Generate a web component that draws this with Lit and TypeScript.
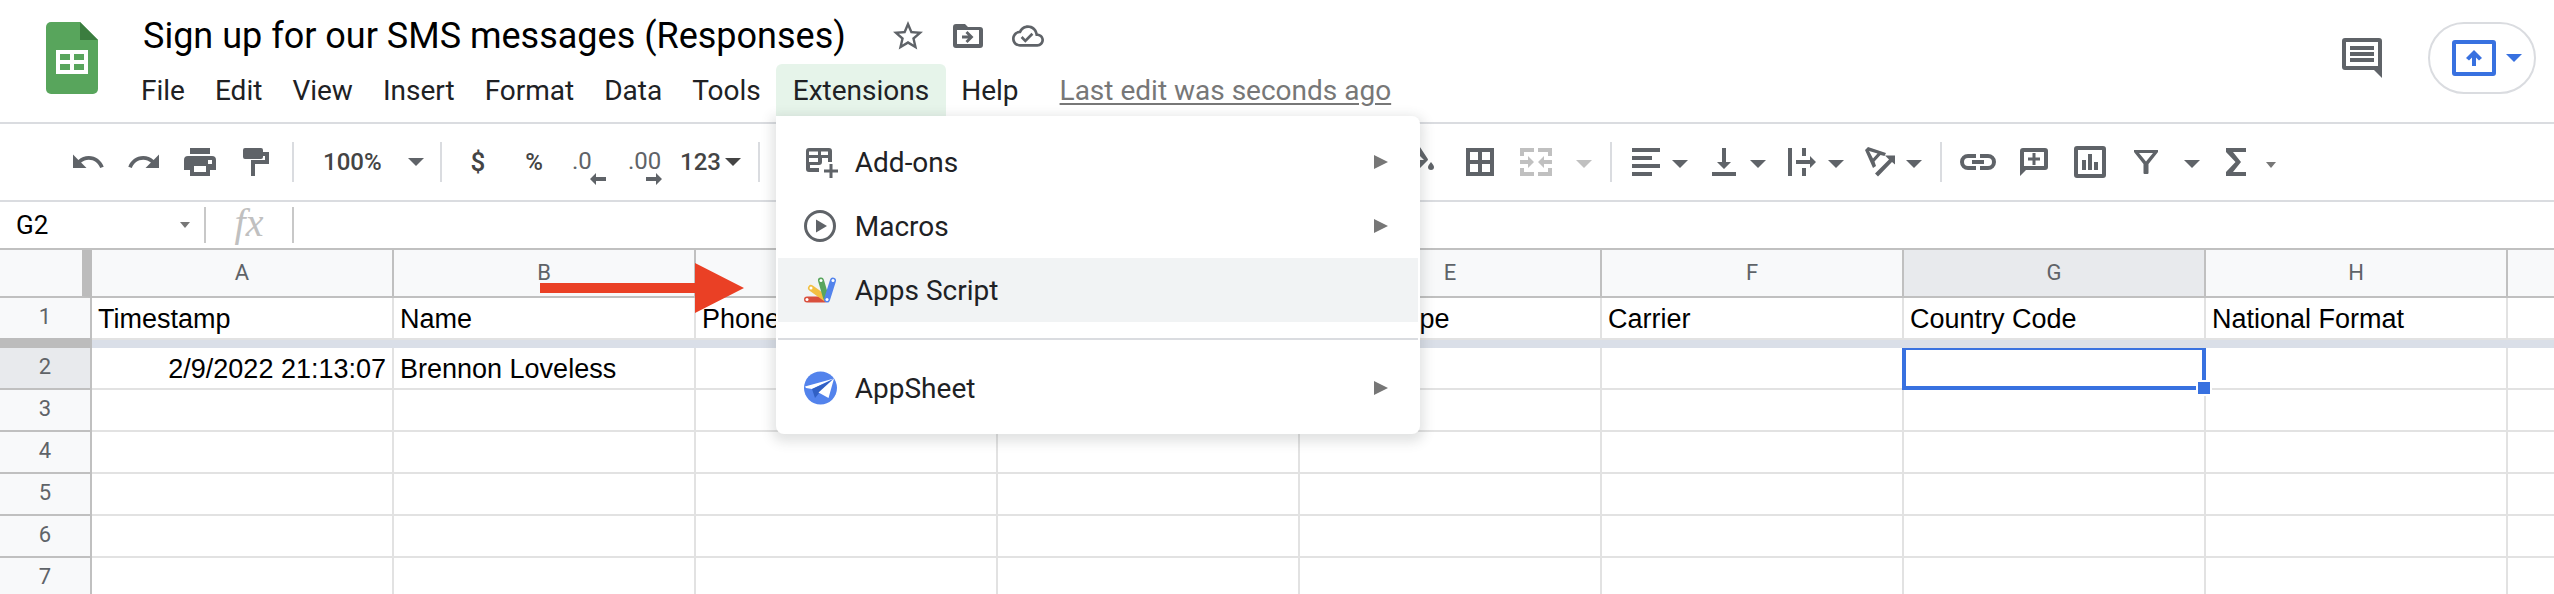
import { LitElement, html, css, svg, nothing, TemplateResult } from "lit";
import { customElement, property, state } from "lit/decorators.js";
import { classMap } from "lit/directives/class-map.js";

// Every icon is drawn on a 36 x 36 grid unless it names its own box.
const icons: Record<string, TemplateResult> = {
  undo: svg`<path transform="scale(1.5)" d="M12.5 8c-2.65 0-5.05.99-6.9 2.6L2 7v9h9l-3.62-3.62c1.39-1.16 3.16-1.88 5.12-1.88 3.54 0 6.55 2.31 7.6 5.5l2.37-.78C21.08 11.03 17.15 8 12.5 8z"/>`,
  redo: svg`<path transform="scale(1.5)" d="M18.4 10.6C16.55 8.99 14.15 8 11.5 8c-4.65 0-8.58 3.03-9.96 7.22L3.9 16c1.05-3.19 4.05-5.5 7.6-5.5 1.95 0 3.73.72 5.12 1.88L13 16h9V7l-3.6 3.6z"/>`,
  print: svg`<path d="M8 4h20v6H8z"/><path fill-rule="evenodd" d="M6 12h24a4 4 0 0 1 4 4v10h-6v6H8v-6H2V16a4 4 0 0 1 4-4zm6 10v6h12v-6zm14-6v4h4v-4z"/>`,
  paint: svg`<path d="M7 4h16a2 2 0 0 1 2 2v2h6v12H17v12h-4V16h14v-4h-2v1a2 2 0 0 1-2 2H7a2 2 0 0 1-2-2V6a2 2 0 0 1 2-2z"/>`,
  fill: svg`<path fill-rule="evenodd" d="M9 2l3-2 9.500 14.500a1.500 1.500 0 0 1 0 2L12 26a2 2 0 0 1-3 0L1 18a2 2 0 0 1 0-3L10 6zm2 7l-7 7h14z"/><path d="M25 18c2 2.500 3 4 3 5a3 3 0 0 1-6 0c0-1 1-2.500 3-5z"/>`,
  borders: svg`<path fill-rule="evenodd" d="M4 4h28v28H4zm4 4v8h8V8zm12 0v8h8V8zM8 20v8h8v-8zm12 0v8h8v-8z"/>`,
  merge: svg`<path d="M2 4h14v4H6v4H2zM20 4h14v8h-4V8H20zM2 24h4v4h10v4H2zM30 24h4v8H20v-4h10zM2 16h8v-4l6 6-6 6v-4H2zM34 16h-8v-4l-6 6 6 6v-4h8z"/>`,
  align: svg`<path d="M4 4h28v4H4zM4 12h20v4H4zM4 20h28v4H4zM4 28h20v4H4z"/>`,
  valign: svg`<path d="M16 4h4v14h5l-7 7-7-7h5zM6 28h24v4H6z"/>`,
  wrap: svg`<path d="M4 4h4v28H4zM18 4h4v8h-4zM18 24h4v8h-4zM12 16h14v-4l6 6-6 6v-4H12z"/>`,
  rotate: svg`<path fill-rule="evenodd" d="M3 6L6 3l18 6-1.500 3-4-1-6 6.500 1.500 4.500-3 2zM7 7l4 7.500 4.500-5z"/><path d="M13 29.500L27 15.500l-4-4h10v9l-3-2.500-14 14.500z"/>`,
  link: svg`<path d="M16 10H8a8 8 0 0 0 0 16h8v-4H8a4 4 0 0 1 0-8h8zM20 10h8a8 8 0 0 1 0 16h-8v-4h8a4 4 0 0 0 0-8h-8zM12 16h12v4H12z"/>`,
  comment: svg`<path fill-rule="evenodd" d="M7 4h22a3 3 0 0 1 3 3v16a3 3 0 0 1-3 3H10l-6 6V7a3 3 0 0 1 3-3zm1 4v14h20V8z"/><path d="M16.500 9h3v4.500H24v3h-4.500V21h-3v-4.500H12v-3h4.500z"/>`,
  chart: svg`<path fill-rule="evenodd" d="M5 2h26a3 3 0 0 1 3 3v26a3 3 0 0 1-3 3H5a3 3 0 0 1-3-3V5a3 3 0 0 1 3-3zm1 4v24h24V6z"/><path d="M10 16h4v10h-4zM16 10h4v16h-4zM22 18h4v8h-4z"/>`,
  filter: svg`<path fill-rule="evenodd" d="M6 6h24v2l-9.500 12v9a1 1 0 0 1-1 1h-3a1 1 0 0 1-1-1v-9L6 8zm5 3l7 8.500L25 9z"/>`,
  sigma: svg`<path d="M6 4h20v4H13l8 10-8 10h13v4H6v-4l9.500-10L6 8z"/>`,
  star: svg`<path transform="scale(1.5)" d="M22 9.240l-7.190-.620L12 2 9.190 8.630 2 9.240l5.460 4.730L5.820 21 12 17.270 18.180 21l-1.630-7.030L22 9.240zM12 15.400l-3.760 2.270 1-4.280-3.320-2.880 4.380-.380L12 6.100l1.710 4.040 4.380.380-3.320 2.880 1 4.280L12 15.400z"/>`,
  move: svg`<path fill-rule="evenodd" d="M6 6h9l3 3h12a3 3 0 0 1 3 3v15a3 3 0 0 1-3 3H6a3 3 0 0 1-3-3V9a3 3 0 0 1 3-3zm1 6v14h22V12z"/><path d="M12 17.500h6l-2.500-2.500 2-2 6 6-6 6-2-2 2.500-2.500h-6z"/>`,
  cloud: svg`<path transform="translate(2 2) scale(1.333)" d="M19.350 10.040C18.670 6.590 15.640 4 12 4 9.110 4 6.600 5.640 5.350 8.040 2.340 8.360 0 10.910 0 14c0 3.310 2.690 6 6 6h13c2.760 0 5-2.240 5-5 0-2.640-2.050-4.780-4.650-4.960zM19 18H6c-2.210 0-4-1.790-4-4 0-2.050 1.530-3.760 3.560-3.970l1.070-.110.500-.950C8.080 7.140 9.940 6 12 6c2.620 0 4.880 1.860 5.390 4.430l.300 1.500 1.530.110c1.560.100 2.780 1.410 2.780 2.960 0 1.650-1.350 3-3 3zm-9-3.820l-2.090-2.090L6.500 13.500 10 17l6.010-6.010-1.410-1.410z"/>`,
  addons: svg`<path fill-rule="evenodd" d="M7 4h20a3 3 0 0 1 3 3v11h-4v-4h-6v4a3 3 0 0 1-3 3H8v3h9v4H7a3 3 0 0 1-3-3V7a3 3 0 0 1 3-3zm0 3.500V11h9V7.500zm12 0V11h7V7.500zM7 14v4h9v-4z"/><path d="M27.500 20h3v5.500H36v3h-5.500V34h-3v-5.500H22v-3h5.500z"/>`,
  play: svg`<path fill-rule="evenodd" d="M18 2a16 16 0 1 1 0 32 16 16 0 0 1 0-32zm0 3a13 13 0 1 0 0 26 13 13 0 0 0 0-26z"/><path d="M14 11.500v13l11-6.500z"/>`,
  script: svg`
    <g stroke-width="6" stroke-linecap="round">
      <path stroke="#d94f3d" d="M5 27.500h18"/>
      <path stroke="#f2bf42" d="M9 16l14 10"/>
      <path stroke="#58a55c" d="M19 8.500l5 17"/>
      <path stroke="#5383ec" d="M31 8.500l-6 19"/>
    </g>
    <g fill="#fff"><circle cx="5" cy="27.500" r="1.500"/><circle cx="9" cy="16" r="1.500"/><circle cx="19" cy="8.500" r="1.500"/><circle cx="31" cy="8.500" r="1.500"/><circle cx="25" cy="27.500" r="1.500"/></g>`,
  appsheet: svg`
    <circle cx="18.500" cy="18" r="16.500" fill="#5383ec"/>
    <path fill="#fff" d="M3 16.500L32 8.500 10 19l-6-1z"/>
    <path fill="#3160c4" d="M10 19L30 10 18 22l-5 6z"/>
    <path fill="#fff" d="M32 8.500L16.500 22.500 26.500 28z"/>`,
  arrowLeft: svg`<path d="M0 6l6-6v4h10v4H6v4z"/>`,
  arrowRight: svg`<path d="M16 6l-6-6v4H0v4h10v4z"/>`,
};

const icon = (name: string) =>
  html`<svg class="icon" viewBox="0 0 36 36" aria-hidden="true">${icons[name]}</svg>`;

const caret = html`<svg class="caret" viewBox="0 0 16 8" aria-hidden="true"><path d="M0 0h16L8 8z"/></svg>`;
const smallCaret = html`<svg class="caret small" viewBox="0 0 10 6" aria-hidden="true"><path d="M0 0h10L5 6z"/></svg>`;

const shared = css`
  *, *::before, *::after { box-sizing: border-box; }
  button, input, select {
    font: inherit;
    color: inherit;
    border: 0;
    margin: 0;
    padding: 0;
    background: none;
    outline: none;
    border-radius: 0;
  }
  svg { display: block; flex: none; fill: currentColor; }
  .icon { width: 36px; height: 36px; }
  .caret { width: 16px; height: 8px; }
  .caret.small { width: 10px; height: 6px; color: #777; }
`;

@customElement("extensions-menu")
class ExtensionsMenu extends LitElement {
  static styles = [
    shared,
    css`
      :host {
        display: block;
        width: 644px;
        padding: 14px 2px;
        background: #fff;
        border-radius: 0 8px 8px 8px;
        box-shadow: 0 4px 12px 4px rgba(60, 64, 67, 0.15);
        color: #202124;
        font-size: 28px;
      }
      .item {
        display: flex;
        align-items: center;
        width: 100%;
        height: 64px;
        padding: 0 30px 0 24px;
        text-align: left;
      }
      .item.active { background: #f1f3f4; }
      .icon { color: #5f6368; margin-right: 17px; }
      .label { flex: 1; }
      .more { width: 14px; height: 14px; color: #777; }
      .rule { border: 0; border-top: 2px solid #dadce0; margin: 16px 0; }
    `,
  ];

  private item(glyph: string, label: string, submenu: boolean, active = false) {
    return html`<button class=${classMap({ item: true, active })} role="menuitem">
      ${icon(glyph)}<span class="label">${label}</span>
      ${submenu
        ? html`<svg class="more" viewBox="0 0 14 14" aria-hidden="true"><path d="M0 0l14 7-14 7z"/></svg>`
        : nothing}
    </button>`;
  }

  render() {
    return html`
      ${this.item("addons", "Add-ons", true)}
      ${this.item("play", "Macros", true)}
      ${this.item("script", "Apps Script", false, true)}
      <hr class="rule" />
      ${this.item("appsheet", "AppSheet", true)}
    `;
  }
}

@customElement("doc-header")
class DocHeader extends LitElement {
  static styles = [
    shared,
    css`
      :host {
        display: flex;
        height: 124px;
        border-bottom: 2px solid #dadce0;
        padding: 0 18px 0 46px;
      }
      .logo { width: 52px; height: 72px; margin: 22px 28px 0 0; }
      .doc { flex: 1; }
      .title-row {
        display: flex;
        align-items: center;
        height: 64px;
        padding: 8px 0 0 17px;
        gap: 24px;
        color: #5f6368;
      }
      .title {
        margin: 0 20px 0 0;
        font-size: 36px;
        font-weight: 400;
        line-height: 44px;
        color: #000;
      }
      .menus { display: flex; align-items: center; height: 52px; font-size: 28px; color: #202124; }
      .entry { position: relative; }
      .menu { height: 52px; padding: 0 15px; }
      .menu.open { background: #e6f4ea; border-radius: 6px 6px 0 0; padding: 0 17px; }
      .popup { position: absolute; left: 0; top: 100%; z-index: 2; }
      .edited { margin-left: 26px; color: #777; text-underline-offset: 3px; }
      .actions { display: flex; align-items: center; gap: 46px; height: 116px; color: #5f6368; }
      .comments { width: 40px; height: 40px; }
      .present {
        display: flex;
        align-items: center;
        gap: 10px;
        height: 72px;
        padding: 0 12px 0 22px;
        border: 2px solid #dadce0;
        border-radius: 36px;
        color: #3871e0;
      }
      .present-icon { width: 44px; height: 36px; }
    `,
  ];

  @state() private open = "Extensions";

  render() {
    const menus = ["File", "Edit", "View", "Insert", "Format", "Data", "Tools", "Extensions", "Help"];
    return html`
      <svg class="logo" viewBox="0 0 52 72" role="img" aria-label="Sheets">
        <path fill="#58a55c" d="M5 0h29l18 18v49a5 5 0 0 1-5 5H5a5 5 0 0 1-5-5V5a5 5 0 0 1 5-5z"/>
        <path fill="#3b7d3f" d="M34 0l18 18H34z"/>
        <path fill="#fff" fill-rule="evenodd" d="M10 28h32v24H10zm4 4v6h10v-6zm14 0v6h10v-6zM14 42v6h10v-6zm14 0v6h10v-6z"/>
      </svg>
      <div class="doc">
        <div class="title-row">
          <h1 class="title">Sign up for our SMS messages (Responses)</h1>
          <button aria-label="Star">${icon("star")}</button>
          <button aria-label="Move">${icon("move")}</button>
          <button aria-label="See document status">${icon("cloud")}</button>
        </div>
        <nav class="menus">
          ${menus.map(
            (name) => html`<div class="entry">
              <button
                class=${classMap({ menu: true, open: this.open === name })}
                @click=${() => (this.open = this.open === name ? "" : name)}
              >${name}</button>
              ${name === "Extensions" && this.open === name
                ? html`<extensions-menu class="popup" role="menu"></extensions-menu>`
                : nothing}
            </div>`
          )}
          <a class="edited" href="#history">Last edit was seconds ago</a>
        </nav>
      </div>
      <div class="actions">
        <button aria-label="Open comment history">
          <svg class="comments" viewBox="0 0 40 40"><path fill-rule="evenodd" d="M3 0h34a3 3 0 0 1 3 3v37l-8-8H3a3 3 0 0 1-3-3V3a3 3 0 0 1 3-3zm1 4v24h32V4z"/><path d="M8 8h24v4H8zM8 14h24v4H8zM8 20h24v4H8z"/></svg>
        </button>
        <button class="present" aria-label="Present">
          <svg class="present-icon" viewBox="0 0 44 36"><path fill-rule="evenodd" d="M3 0h38a3 3 0 0 1 3 3v30a3 3 0 0 1-3 3H3a3 3 0 0 1-3-3V3a3 3 0 0 1 3-3zm1 4v28h36V4z"/><path d="M22 10l8 8-3 2.500-3-3V26h-4v-8.500l-3 3-3-2.500z"/></svg>
          ${caret}
        </button>
      </div>
    `;
  }
}

@customElement("tool-bar")
class ToolBar extends LitElement {
  static styles = [
    shared,
    css`
      :host {
        display: flex;
        align-items: center;
        height: 78px;
        padding-left: 60px;
        border-bottom: 2px solid #dadce0;
        color: #5f6368;
        font-size: 24px;
        font-weight: 500;
      }
      .tool { display: flex; align-items: center; justify-content: center; flex: none; width: 56px; height: 52px; }
      .tool.text { color: #444; }
      .tool.large { font-size: 26px; }
      .tool.disabled { color: #c0c0c0; }
      .split { display: flex; align-items: center; justify-content: space-between; flex: none; width: 78px; height: 52px; padding: 4px 10px 0 8px; }
      .split .icon { margin-bottom: 4px; }
      .drop { display: flex; align-items: center; flex: none; width: 38px; height: 52px; padding: 4px 0 0 12px; }
      .drop.disabled { color: #c0c0c0; }
      .drop.narrow { width: 36px; padding-left: 10px; }
      .drop.tight { width: 10px; padding: 6px 0 0; }
      .sep { flex: none; width: 2px; height: 40px; margin: 0 8px; background: #dadce0; }
      .zoom { display: flex; align-items: center; width: 130px; padding: 0 8px 0 21px; color: #444; }
      .zoom-value { flex: 1; min-width: 0; appearance: none; line-height: 32px; }
      .zoom .caret { color: #5f6368; }
      .decimal { display: flex; flex-direction: column; align-items: flex-end; width: 56px; padding: 10px 12px 0 10px; line-height: 24px; font-weight: 400; }
      .digits { align-self: flex-start; }
      .step { width: 16px; height: 12px; }
      .formats { display: flex; align-items: center; gap: 4px; width: 76px; height: 52px; padding-left: 6px; color: #444; }
      .text-tools { flex: none; width: 628px; }
    `,
  ];

  private tool(name: string, label: string, disabled = false) {
    return html`<button class=${classMap({ tool: true, disabled })} aria-label=${label}>${icon(name)}</button>`;
  }

  private split(name: string, label: string) {
    return html`<button class="split" aria-label=${label}>${icon(name)}${caret}</button>`;
  }

  render() {
    return html`
      ${this.tool("undo", "Undo")} ${this.tool("redo", "Redo")}
      ${this.tool("print", "Print")} ${this.tool("paint", "Paint format")}
      <span class="sep"></span>
      <label class="zoom">
        <select class="zoom-value" aria-label="Zoom"><option>100%</option></select>${caret}
      </label>
      <span class="sep"></span>
      <button class="tool text large" aria-label="Format as currency">$</button>
      <button class="tool text" aria-label="Format as percent">%</button>
      <button class="tool" aria-label="Decrease decimal places">
        <span class="decimal"><span class="digits">.0</span><svg class="step" viewBox="0 0 16 12">${icons.arrowLeft}</svg></span>
      </button>
      <button class="tool" aria-label="Increase decimal places">
        <span class="decimal"><span class="digits">.00</span><svg class="step" viewBox="0 0 16 12">${icons.arrowRight}</svg></span>
      </button>
      <button class="formats" aria-label="More formats">123${caret}</button>
      <span class="sep"></span>
      <span class="text-tools"></span>
      ${this.tool("fill", "Fill color")} ${this.tool("borders", "Borders")}
      ${this.tool("merge", "Merge cells", true)}
      <button class="drop disabled" aria-label="Merge type">${caret}</button>
      <span class="sep"></span>
      ${this.split("align", "Horizontal align")} ${this.split("valign", "Vertical align")}
      ${this.split("wrap", "Text wrapping")} ${this.split("rotate", "Text rotation")}
      <span class="sep"></span>
      ${this.tool("link", "Insert link")} ${this.tool("comment", "Insert comment")}
      ${this.tool("chart", "Insert chart")} ${this.tool("filter", "Create a filter")}
      <button class="drop narrow" aria-label="Filter views">${caret}</button>
      ${this.tool("sigma", "Functions")}
      <button class="drop tight" aria-label="More functions">${smallCaret}</button>
    `;
  }
}

@customElement("formula-bar")
class FormulaBar extends LitElement {
  static styles = [
    shared,
    css`
      :host {
        display: flex;
        align-items: center;
        height: 48px;
        border-bottom: 2px solid #c0c0c0;
        font-size: 26px;
        color: #000;
      }
      .name-box { display: flex; align-items: center; width: 204px; padding: 0 14px 0 16px; }
      .name { flex: 1; min-width: 0; line-height: 40px; }
      .sep { flex: none; width: 2px; height: 36px; background: #c8c8c8; }
      .fx {
        width: 86px;
        height: 46px;
        text-align: center;
        font: italic 40px/42px "Liberation Serif", serif;
        color: #c0c0c0;
      }
      .formula { flex: 1; padding-left: 12px; height: 44px; }
    `,
  ];
  @property() cell = "G2";

  render() {
    return html`
      <label class="name-box"><input class="name" aria-label="Name box" .value=${this.cell} />${smallCaret}</label>
      <span class="sep"></span>
      <label class="fx" for="formula">fx</label>
      <span class="sep"></span>
      <input id="formula" class="formula" aria-label="Formula" />
    `;
  }
}

@customElement("sheet-grid")
class SheetGrid extends LitElement {
  static styles = [
    shared,
    css`
      :host { display: block; flex: 1; min-height: 0; overflow: hidden; }
      .grid { width: 100%; table-layout: fixed; border-collapse: separate; border-spacing: 0; }
      .row-heads { width: 92px; }
      .data { width: 302px; }
      th, td { padding: 0; overflow: hidden; white-space: nowrap; }
      th {
        background: #f8f9fa;
        color: #5f6368;
        font-size: 22px;
        font-weight: 400;
        line-height: 26px;
        border: solid #c0c0c0;
        border-width: 0 2px 2px 0;
      }
      .letters th { height: 48px; }
      .letters .corner { border-right: 10px solid #bcbcbc; }
      .row th { height: 42px; padding-bottom: 2px; }
      .grid .current { background: #e8eaed; }
      .row td {
        height: 42px;
        padding: 0 6px 4px;
        vertical-align: bottom;
        border: solid #e2e2e2;
        border-width: 0 2px 2px 0;
        font-family: "Liberation Sans", Arial, sans-serif;
        font-size: 27px;
        line-height: 30px;
        color: #000;
      }
      .row .number { text-align: right; }
      .row .selected { position: relative; overflow: visible; }
      .cursor { position: absolute; inset: 0 -2px -2px; border: 4px solid #3871e0; border-top-width: 2px; }
      .handle { position: absolute; right: -10px; bottom: -10px; width: 16px; height: 16px; border: 2px solid #fff; background: #3871e0; }
      .freeze td { height: 8px; background: #dadfe8; }
      .freeze th { height: 8px; background: #bcbcbc; border: 0; }
      .row.frozen th { border-bottom-color: #bcbcbc; }
      .letters th:last-child, .row td:last-child { border-right: 0; }
    `,
  ];

  private columns = ["A", "B", "C", "D", "E", "F", "G", "H", ""];
  private rows: string[][] = [
    ["Timestamp", "Name", "Phone Number", "", "Phone Type", "Carrier", "Country Code", "National Format", ""],
    ["2/9/2022 21:13:07", "Brennon Loveless"],
    [], [], [], [], [],
  ];

  private row(cells: string[], index: number) {
    const number = index + 1;
    return html`
      <tr class=${classMap({ row: true, frozen: index === 0 })}>
        <th scope="row" class=${classMap({ current: number === 2 })}>${number}</th>
        ${this.columns.map((column, i) => {
          const selected = number === 2 && column === "G";
          return html`<td class=${classMap({ selected, number: /^\d/.test(cells[i] ?? "") })}>${cells[i] ?? ""}${selected
            ? html`<span class="cursor"><span class="handle"></span></span>`
            : nothing}</td>`;
        })}
      </tr>
      ${index === 0 ? html`<tr class="freeze"><th></th><td colspan="9"></td></tr>` : nothing}
    `;
  }

  render() {
    return html`<table class="grid">
      <colgroup>
        <col class="row-heads" />
        ${this.columns.map((column) => html`<col class=${column ? "data" : "rest"} />`)}
      </colgroup>
      <thead>
        <tr class="letters">
          <th class="corner"></th>
          ${this.columns.map((c) => html`<th scope="col" class=${classMap({ current: c === "G" })}>${c}</th>`)}
        </tr>
      </thead>
      <tbody>${this.rows.map((cells, i) => this.row(cells, i))}</tbody>
    </table>`;
  }
}

@customElement("app-root")
class AppRoot extends LitElement {
  static styles = [
    shared,
    css`
      :host {
        position: relative;
        display: flex;
        flex-direction: column;
        height: 100vh;
        overflow: hidden;
        background: #fff;
        font-family: Roboto, "Liberation Sans", sans-serif;
      }
      .pointer {
        position: absolute;
        left: 540px;
        top: 263px;
        width: 204px;
        height: 50px;
        color: #ea4025;
        z-index: 3;
      }
    `,
  ];

  render() {
    return html`
      <doc-header></doc-header>
      <tool-bar></tool-bar>
      <formula-bar></formula-bar>
      <sheet-grid></sheet-grid>
      <svg class="pointer" viewBox="0 0 204 50" aria-hidden="true"><path d="M0 20h155V0l49 25-49 25V30H0z"/></svg>
    `;
  }
}
